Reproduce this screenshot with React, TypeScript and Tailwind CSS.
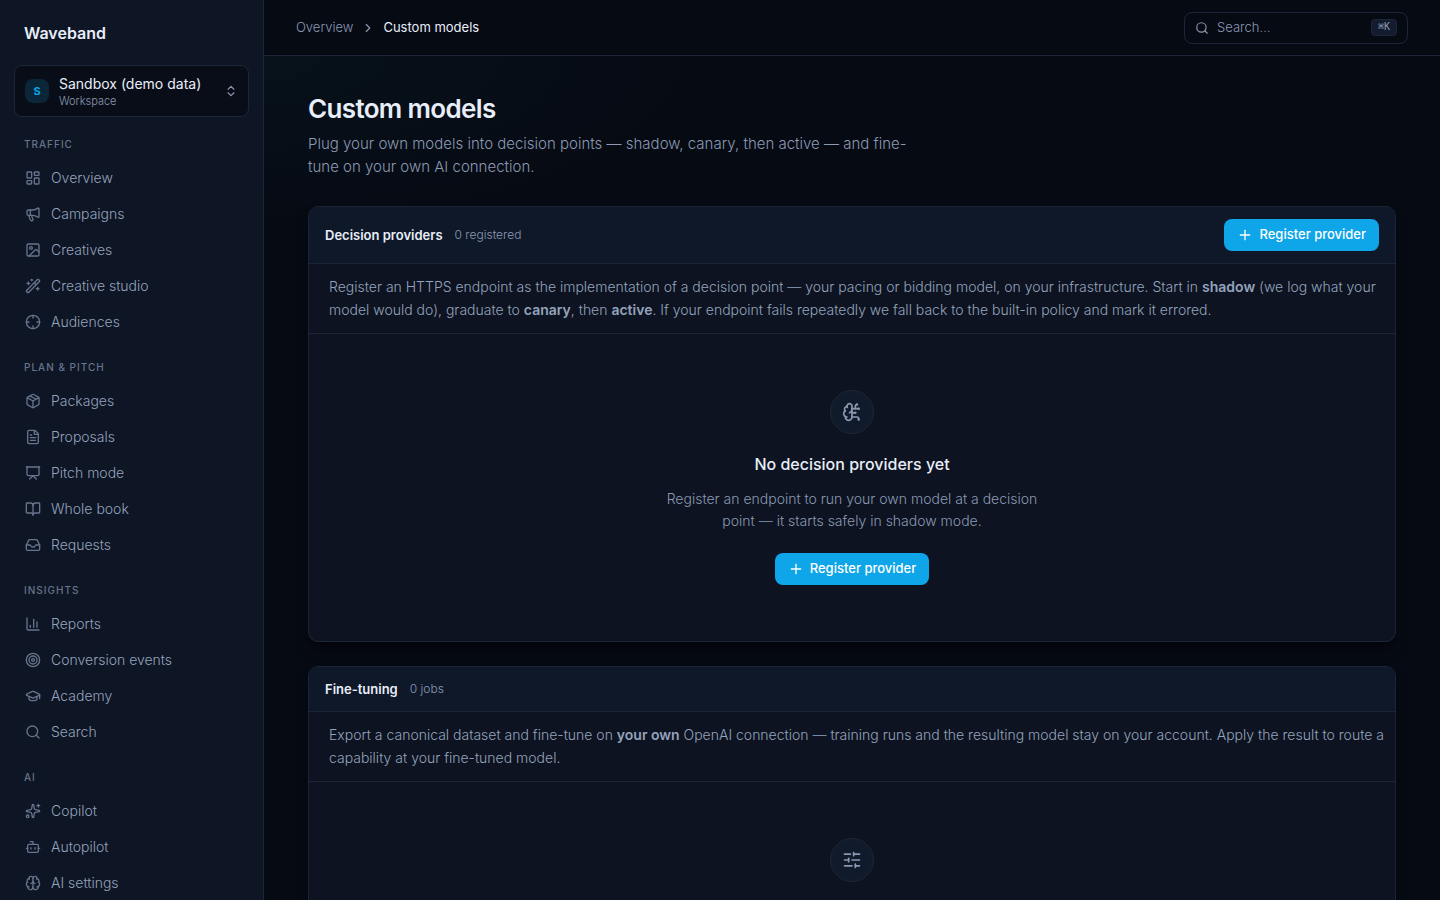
import React from 'react';
import {
  BookOpen,
  Bot,
  Brain,
  BrainCircuit,
  ChartColumn,
  ChevronRight,
  ChevronsUpDown,
  Crosshair,
  FileText,
  GraduationCap,
  Image,
  Inbox,
  LayoutDashboard,
  LucideIcon,
  Megaphone,
  Package,
  Plus,
  Presentation,
  Search,
  SlidersHorizontal,
  Sparkles,
  Target,
  WandSparkles,
} from 'lucide-react';

interface NavItem {
  label: string;
  icon: LucideIcon;
}

interface NavSection {
  title: string;
  items: NavItem[];
}

const navSections: NavSection[] = [
  {
    title: 'Traffic',
    items: [
      { label: 'Overview', icon: LayoutDashboard },
      { label: 'Campaigns', icon: Megaphone },
      { label: 'Creatives', icon: Image },
      { label: 'Creative studio', icon: WandSparkles },
      { label: 'Audiences', icon: Crosshair },
    ],
  },
  {
    title: 'Plan & Pitch',
    items: [
      { label: 'Packages', icon: Package },
      { label: 'Proposals', icon: FileText },
      { label: 'Pitch mode', icon: Presentation },
      { label: 'Whole book', icon: BookOpen },
      { label: 'Requests', icon: Inbox },
    ],
  },
  {
    title: 'Insights',
    items: [
      { label: 'Reports', icon: ChartColumn },
      { label: 'Conversion events', icon: Target },
      { label: 'Academy', icon: GraduationCap },
      { label: 'Search', icon: Search },
    ],
  },
  {
    title: 'AI',
    items: [
      { label: 'Copilot', icon: Sparkles },
      { label: 'Autopilot', icon: Bot },
      { label: 'AI settings', icon: Brain },
    ],
  },
];

const Sidebar: React.FC = () => (
  <aside className="flex w-[264px] shrink-0 flex-col overflow-hidden border-r border-[#1c2638] bg-[#0e1524] px-3.5">
    <div className="px-2.5 pt-[21px] pb-5 text-base font-semibold text-[#e8eef9]">Waveband</div>

    <button className="flex w-full shrink-0 items-center gap-2.5 rounded-lg border border-[#1c2638] bg-[#090d17] px-2.5 py-2 text-left">
      <span className="flex size-6 items-center justify-center rounded-lg bg-[#0a2638] text-[11px] font-bold text-[#0ea5e9]">S</span>
      <span className="flex min-w-0 flex-1 flex-col">
        <span className="truncate text-sm leading-5 text-[#e8eef9]">Sandbox (demo data)</span>
        <span className="text-[11px] leading-[14px] font-light text-[#8b99b3]">Workspace</span>
      </span>
      <ChevronsUpDown className="size-3.5 text-[#8a98b1]" />
    </button>

    <nav className="mt-[19px] flex flex-col gap-[19px]">
      {navSections.map((section) => (
        <div key={section.title}>
          <h2 className="px-2.5 pb-2 text-[10px] leading-4 font-medium tracking-widest text-[#66748c] uppercase">{section.title}</h2>
          {section.items.map(({ label, icon: Icon }) => (
            <a key={label} href="#" className="flex h-9 items-center gap-2.5 rounded-md px-[11px] text-sm font-light text-[#94a3bd]">
              <Icon className="size-4 shrink-0 text-[#66748c]" />
              {label}
            </a>
          ))}
        </div>
      ))}
    </nav>
  </aside>
);

const TopBar: React.FC = () => (
  <header className="flex h-14 shrink-0 items-center justify-between border-b border-[#1c2638] bg-[#060a13] px-8">
    <nav aria-label="Breadcrumb" className="flex items-center gap-2 text-[13px]">
      <a href="#" className="font-light text-[#8b99b3]">Overview</a>
      <ChevronRight className="size-3.5 text-[#8a98b1]" />
      <span className="text-[#e8eef9]">Custom models</span>
    </nav>
    <button className="flex h-8 w-56 items-center gap-2 rounded-lg border border-[#1c2638] px-2.5 text-[13px] text-[#8b99b3]">
      <Search className="size-3.5" />
      <span className="flex-1 text-left font-light">Search…</span>
      <kbd className="rounded border border-[#1c2638] bg-[#131c2e] px-1.5 pb-px font-['DejaVu_Sans_Mono',monospace] text-[10px] leading-[14px] text-[#8a98b1]">⌘K</kbd>
    </button>
  </header>
);

const RegisterButton: React.FC = () => (
  <button className="flex h-8 items-center gap-1.5 rounded-lg bg-[#0ea5e9] px-[13px] text-[13px] font-medium whitespace-nowrap text-white">
    <Plus className="size-4" />
    Register provider
  </button>
);

interface PanelProps {
  title: string;
  count: string;
  action?: React.ReactNode;
  description: React.ReactNode;
  children: React.ReactNode;
}

const Panel: React.FC<PanelProps> = ({ title, count, action, description, children }) => (
  <section className="overflow-hidden rounded-[10px] border border-[#1c2638] bg-[#0d1320] shadow-lg shadow-black/40">
    <div className="flex items-center gap-3 border-b border-[#1c2638] bg-[#0f1828] px-4 py-3">
      <h2 className="text-[13px] leading-5 font-semibold text-[#e8eef9]">{title}</h2>
      <span className="flex-1 text-xs font-light text-[#8b99b3]">{count}</span>
      {action}
    </div>
    <p className="border-b border-[#1c2638] pt-[11px] pr-1 pb-3 pl-5 text-sm leading-[23px] font-light text-[#94a3bd]">{description}</p>
    {children}
  </section>
);

const Term: React.FC<{ children: React.ReactNode }> = ({ children }) => (
  <strong className="font-semibold">{children}</strong>
);

interface EmptyStateProps {
  icon: LucideIcon;
  title: string;
  text: string;
  action?: React.ReactNode;
}

const EmptyState: React.FC<EmptyStateProps> = ({ icon: Icon, title, text, action }) => (
  <div className="flex flex-col items-center px-6 py-14 text-center">
    <div className="flex size-11 items-center justify-center rounded-full border border-[#1c2638] bg-[#111a2b]">
      <Icon className="size-5 text-[#8a98b1]" />
    </div>
    <h3 className="mt-4 text-base leading-7 font-medium text-[#e8eef9]">{title}</h3>
    <p className="mt-2.5 mb-[21px] max-w-[384px] text-sm leading-[22px] font-light text-[#8b99b3]">{text}</p>
    {action}
  </div>
);

export default function App() {
  return (
    <div className="flex h-screen overflow-hidden bg-[#060a13] font-[Inter,sans-serif]">
      <Sidebar />
      <div className="flex min-w-0 flex-1 flex-col">
        <TopBar />
        <main className="flex-1 overflow-y-auto bg-[radial-gradient(440px_170px_at_top_left,#07121b,#060a13)] px-11 pt-9 pb-11 [scrollbar-width:none]">
          <h1 className="text-[26px] leading-[34px] font-semibold tracking-tight text-[#e8eef9]">Custom models</h1>
          <p className="mt-1.5 max-w-[620px] text-[15px] leading-[23px] font-light text-[#8b99b3]">
            Plug your own models into decision points — shadow, canary, then active — and fine-tune on your own AI connection.
          </p>

          <div className="mt-7 flex flex-col gap-6">
            <Panel
              title="Decision providers"
              count="0 registered"
              action={<RegisterButton />}
              description={
                <>
                  Register an HTTPS endpoint as the implementation of a decision point — your pacing or bidding model, on your
                  infrastructure. Start in <Term>shadow</Term> (we log what your model would do), graduate to{' '}
                  <Term>canary</Term>, then <Term>active</Term>. If your endpoint fails repeatedly we fall back to the
                  built-in policy and mark it errored.
                </>
              }
            >
              <EmptyState
                icon={BrainCircuit}
                title="No decision providers yet"
                text="Register an endpoint to run your own model at a decision point — it starts safely in shadow mode."
                action={<RegisterButton />}
              />
            </Panel>

            <Panel
              title="Fine-tuning"
              count="0 jobs"
              description={
                <>
                  Export a canonical dataset and fine-tune on <Term>your own</Term> OpenAI connection — training runs and the
                  resulting model stay on your account. Apply the result to route a capability at your fine-tuned model.
                </>
              }
            >
              <EmptyState
                icon={SlidersHorizontal}
                title="No fine-tuning jobs yet"
                text="Export a dataset and start a job to train a model on your own account."
              />
            </Panel>
          </div>
        </main>
      </div>
    </div>
  );
}
